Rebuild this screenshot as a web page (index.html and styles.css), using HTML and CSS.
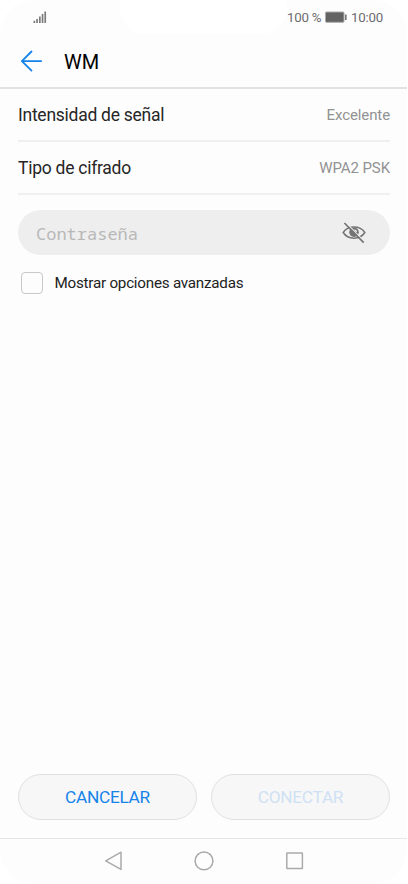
FILE: index.html
```
<!DOCTYPE html>
<html lang="es">
<head>
<meta charset="utf-8">
<title>WM</title>
<link rel="stylesheet" href="styles.css">
</head>
<body>
<div class="screen">
  <div class="notch"></div>
  <div class="status">
    <svg class="signal" width="14" height="12" viewBox="0 0 14 12" fill="#7c7c7c"><path d="M.5 9.800h1.700V12H.5zM3.200 8h1.700v4H3.200zM6 5.600h1.700V12H6zM8.700 3h1.700v9H8.700zM11.400.4h1.700V12h-1.700z"/></svg>
    <span class="percent">100 %</span>
    <svg class="battery" width="22" height="12" viewBox="0 0 22 12"><rect x=".5" y="1" width="18.500" height="10.300" rx="1" fill="#636363" stroke="#aaa"/><path d="M20.800 3.500v5.400" stroke="#747474" stroke-width="1.600"/></svg>
    <span class="time">10:00</span>
  </div>
  <header class="header">
    <svg width="22" height="22" viewBox="0 0 22 22" fill="none" stroke="#1583ea" stroke-width="1.800"><path d="M20.800 11.200H.8M11 1L.9 11.200l10.100 10"/></svg>
    <h1>WM</h1>
  </header>
  <main class="content">
    <div class="row"><span class="label">Intensidad de señal</span><span class="value">Excelente</span></div>
    <div class="row"><span class="label">Tipo de cifrado</span><span class="value">WPA2 PSK</span></div>
    <div class="field">
      <span class="placeholder">Contraseña</span>
      <svg width="24" height="22" viewBox="0 0 24 22" fill="none" stroke="#747474" stroke-width="1.500"><path d="M1.200 10.500C6 3.300 18 3.300 22.800 10.500C18 18 6 18 1.200 10.500Z"/><circle cx="12" cy="10.200" r="4.800" fill="#747474" stroke="none"/><path d="M12.500 7.800a2.600 2.600 0 0 1 2 2.200" stroke="#eee" stroke-width="1.300"/><path d="M3.600 .2L22.600 19.800" stroke="#eee" stroke-width="1.200"/><path d="M2.400 1L21.700 20.600" stroke-width="1.700"/></svg>
    </div>
    <div class="option"><span class="checkbox"></span><span>Mostrar opciones avanzadas</span></div>
  </main>
  <div class="actions">
    <div class="button">CANCELAR</div>
    <div class="button disabled">CONECTAR</div>
  </div>
  <nav class="nav">
    <svg width="200" height="20" viewBox="0 0 200 20" fill="none" stroke="#aaa" stroke-width="1.500" stroke-linejoin="round"><path d="M17 1.200v17.200L1.700 9.800Z"/><circle cx="100" cy="9.900" r="8.900"/><rect x="182.800" y="2" width="15.600" height="15.600" rx=".5"/></svg>
  </nav>
</div>
</body>
</html>
```
FILE: styles.css
```
* { box-sizing: border-box; }
body { margin: 0; background: #fff; font-family: Roboto, sans-serif; }
.screen {
  position: relative;
  display: flex;
  flex-direction: column;
  width: 407px;
  height: 884px;
  background: #fdfdfd;
  border-radius: 34px;
  overflow: hidden;
}
.notch {
  position: absolute;
  top: 0;
  left: 120px;
  width: 167px;
  height: 34px;
  background: #fff;
  border-radius: 0 0 26px 26px;
}
.status {
  position: relative;
  display: flex;
  align-items: center;
  height: 34px;
  padding: 0 24px 0 33px;
  color: #6c6c6c;
  font-size: 13.3px;
  letter-spacing: -0.2px;
}
.percent { margin-left: auto; }
.battery { margin: 0 3.5px 0 4px; }
.header {
  display: flex;
  align-items: center;
  gap: 21px;
  height: 55px;
  padding: 0 21px;
  border-bottom: 2px solid #e2e2e2;
}
.header h1 { margin: 2px 0 0; font-size: 20px; font-weight: 400; color: #000; }
.content { flex: 1; padding: 0 17px 0 18px; }
.row {
  display: flex;
  align-items: center;
  justify-content: space-between;
  height: 53px;
  border-bottom: 2px solid #f0f0f0;
}
.label { font-size: 17.5px; letter-spacing: -0.26px; color: #262626; }
.value { font-size: 15px; letter-spacing: -0.1px; color: #929292; }
.field {
  display: flex;
  align-items: center;
  justify-content: space-between;
  height: 45px;
  margin-top: 15px;
  padding: 0 24px 0 18px;
  border-radius: 23px;
  background: #eee;
}
.placeholder {
  padding-top: 1px;
  font: 17px "Noto Sans Mono", "DejaVu Sans Mono", monospace;
  color: #b8b8b8;
}
.option {
  display: flex;
  align-items: center;
  gap: 11.5px;
  margin: 17px 0 0 3px;
  font-size: 15.2px;
  letter-spacing: -0.23px;
  color: #222;
}
.checkbox {
  width: 22px;
  height: 22px;
  border: 1px solid #c8c8c8;
  border-radius: 4px;
}
.actions { display: flex; gap: 14px; padding: 0 17px 18px 18px; }
.button {
  flex: 1;
  height: 46px;
  border: 1px solid #e0e0e0;
  border-radius: 23px;
  background: #f7f7f7;
  color: #1583ea;
  font-size: 17.3px;
  letter-spacing: -0.3px;
  line-height: 45px;
  text-align: center;
}
.disabled { color: #cfe1f4; }
.nav {
  display: flex;
  align-items: center;
  justify-content: center;
  height: 46px;
  padding-bottom: 2px;
  border-top: 1px solid #e6e6e6;
}
```
